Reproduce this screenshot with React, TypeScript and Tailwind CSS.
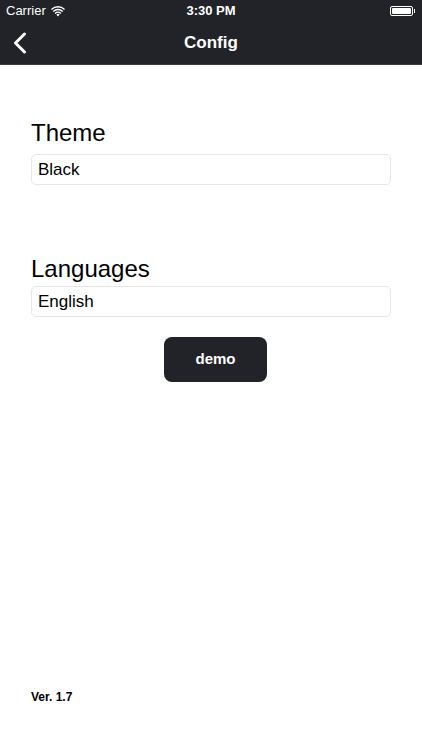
export default function App() {
  return (
    <div className="w-[422px] h-[750px] bg-white flex flex-col font-['Liberation_Sans',Arial,sans-serif] text-black">
      {/* header */}
      <div className="bg-[#212329] h-[65px] flex flex-col border-b border-[#3a3c42]">
        <div className="h-[22px] flex items-center justify-between px-[6px] text-white text-[13px] relative">
          <div className="flex items-center gap-[5px]">
            <span>Carrier</span>
            <svg width="14" height="11" viewBox="0 0 14 11" fill="white">
              <path d="M7 10.5 L5.3 8.6 A2.5 2.5 0 0 1 8.7 8.6 Z" />
              <path d="M3.6 6.9 A4.9 4.9 0 0 1 10.4 6.9 L9.5 7.9 A3.6 3.6 0 0 0 4.5 7.9 Z" />
              <path d="M1.8 4.9 A7.5 7.5 0 0 1 12.2 4.9 L11.3 5.9 A6.2 6.2 0 0 0 2.7 5.9 Z" />
              <path d="M0 2.9 A10.1 10.1 0 0 1 14 2.9 L13.1 3.9 A8.8 8.8 0 0 0 0.9 3.9 Z" />
            </svg>
          </div>
          <span className="absolute left-1/2 -translate-x-1/2 font-bold text-[13px]">3:30 PM</span>
          <div className="flex items-center pr-[1px]">
            <div className="w-[23px] h-[10px] border border-white rounded-[2px] p-[1px]">
              <div className="w-full h-full bg-white rounded-[1px]" />
            </div>
            <div className="w-[1.5px] h-[4px] bg-white ml-[1px]" />
          </div>
        </div>
        <div className="flex-1 flex items-center justify-center relative">
          <svg className="absolute left-[12px] top-[10px]" width="16" height="22" viewBox="0 0 16 22" fill="none">
            <path d="M12.5 2 L3.5 11 L12.5 20" stroke="white" strokeWidth="3" strokeLinecap="round" strokeLinejoin="round" />
          </svg>
          <span className="text-white font-bold text-[17px]">Config</span>
        </div>
      </div>

      {/* content */}
      <div className="flex-1 flex flex-col px-[31px]">
        <div className="mt-[54px] text-[24px] leading-[28px]">Theme</div>
        <div className="mt-[7px] h-[31px] border border-[#e6e6e6] rounded-[5px] flex items-center px-[6px] text-[17px]">
          Black
        </div>
        <div className="mt-[70px] text-[24px] leading-[28px]">Languages</div>
        <div className="mt-[3px] h-[31px] border border-[#e6e6e6] rounded-[5px] flex items-center px-[6px] text-[17px]">
          English
        </div>
        <div className="flex justify-center mt-[20px]">
          <button className="w-[103px] h-[45px] bg-[#212329] rounded-[8px] text-white font-bold text-[15px] ml-[9px]">
            demo
          </button>
        </div>
        <div className="mt-auto mb-[44px] text-[12px] font-bold">Ver. 1.7</div>
      </div>
    </div>
  );
}
